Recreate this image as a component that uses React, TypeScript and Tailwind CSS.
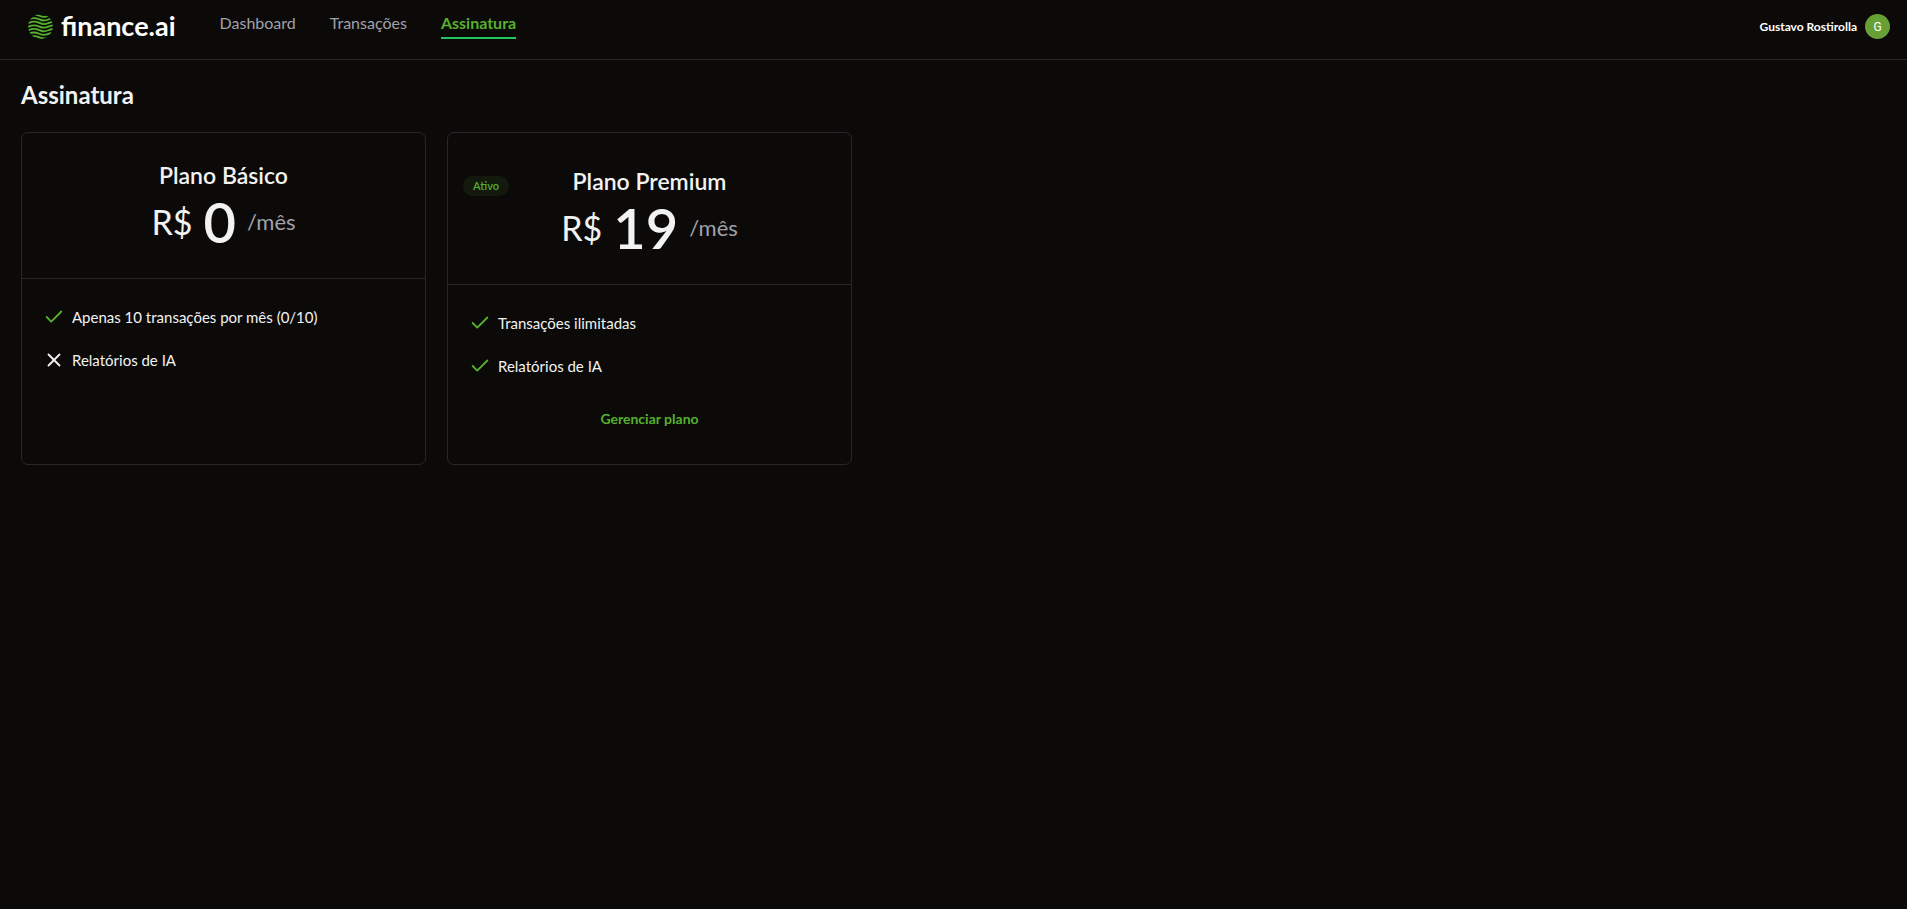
import { Check, X } from "lucide-react";

type Feature = { text: string; included: boolean };

type Plan = {
  name: string;
  price: string;
  active: boolean;
  features: Feature[];
};

const plans: Plan[] = [
  {
    name: "Plano Básico",
    price: "0",
    active: false,
    features: [
      { text: "Apenas 10 transações por mês (0/10)", included: true },
      { text: "Relatórios de IA", included: false },
    ],
  },
  {
    name: "Plano Premium",
    price: "19",
    active: true,
    features: [
      { text: "Transações ilimitadas", included: true },
      { text: "Relatórios de IA", included: true },
    ],
  },
];

const waveOffsets = [1.7, 5.3, 8.9, 12.5, 16.1, 19.7, 23.3];

function Logo() {
  return (
    <a href="#" className="flex items-center gap-2">
      <svg viewBox="0 0 25 25" className="size-[25px]" aria-hidden="true">
        <defs>
          <clipPath id="disc">
            <circle cx="12.5" cy="12.5" r="12.3" />
          </clipPath>
        </defs>
        <g clipPath="url(#disc)" fill="none" stroke="#55b02e" strokeWidth="1.8">
          {waveOffsets.map((y) => (
            <path
              key={y}
              d={`M-4 ${y + 1.2} C0 ${y + 1.2} 1.500 ${y - 1.2} 6 ${y - 1.2} S12 ${y + 1.2} 16 ${y + 1.2} S21 ${y - 1.2} 27 ${y - 1.2}`}
            />
          ))}
        </g>
      </svg>
      <span className="text-[27px] leading-8 font-bold text-white">finance.ai</span>
    </a>
  );
}

function Header() {
  return (
    <header className="flex h-[60px] items-start justify-between border-b border-[#27272a] px-7">
      <div className="flex items-start gap-11">
        <div className="pt-2.5">
          <Logo />
        </div>
        <nav className="flex gap-[34px] pt-3 text-base leading-[22px] text-[#a1a1aa]">
          <a href="#">Dashboard</a>
          <a href="#">Transações</a>
          <a href="#" aria-current="page" className="border-b-2 border-[#22c55e] pb-[3px] font-bold text-[#55b02e]">
            Assinatura
          </a>
        </nav>
      </div>
      <button type="button" className="-mr-[11px] flex items-center gap-2 pt-3.5 text-xs font-bold text-white">
        <span>Gustavo Rostirolla</span>
        <span className="flex size-[25px] items-center justify-center rounded-full bg-[#67a035] font-['Roboto',sans-serif] text-xs font-normal">
          G
        </span>
      </button>
    </header>
  );
}

function PlanCard({ plan }: { plan: Plan }) {
  return (
    <section className="flex w-[405px] flex-col rounded-[7px] border border-[#27272a]">
      <div className="relative border-b border-[#27272a] py-7 text-center">
        {plan.active && (
          <span className="absolute top-[43px] left-[15px] rounded-full bg-[#55b02e]/10 px-2.5 text-[11px] leading-5 font-semibold text-[#55b02e]">
            Ativo
          </span>
        )}
        <h2 className={`text-[23px] leading-7 font-semibold ${plan.active ? "mt-1.5" : ""}`}>{plan.name}</h2>
        <div className="mt-1.5 mb-px flex items-center justify-center gap-[11px]">
          <span className="text-[34px] leading-9">R$</span>
          <span className="text-[56px] leading-[54px] font-semibold">{plan.price}</span>
          <span className="text-[22px] leading-7 text-[#a1a1aa]">/mês</span>
        </div>
      </div>
      <div className="flex flex-col gap-6 px-[21px] pt-[27px] pb-[27px]">
        <ul className="flex flex-col gap-[21px]">
          {plan.features.map((feature) => (
            <li key={feature.text} className="flex items-center gap-[7px] text-[15px] leading-[22px]">
              {feature.included ? (
                <Check size={22} className="text-[#55b02e]" />
              ) : (
                <X size={22} />
              )}
              <span>{feature.text}</span>
            </li>
          ))}
        </ul>
        {plan.active && (
          <a href="#" className="text-center text-sm leading-9 font-bold text-[#55b02e]">
            Gerenciar plano
          </a>
        )}
      </div>
    </section>
  );
}

export default function App() {
  return (
    <div className="min-h-screen bg-[#0c0a09] font-['Lato','Open_Sans',sans-serif] text-[#f2f2f2]">
      <Header />
      <main className="flex flex-col gap-[21px] px-[21px] py-[19px]">
        <h1 className="text-2xl leading-8 font-bold">Assinatura</h1>
        <div className="flex flex-wrap gap-[21px]">
          {plans.map((plan) => (
            <PlanCard key={plan.name} plan={plan} />
          ))}
        </div>
      </main>
    </div>
  );
}
